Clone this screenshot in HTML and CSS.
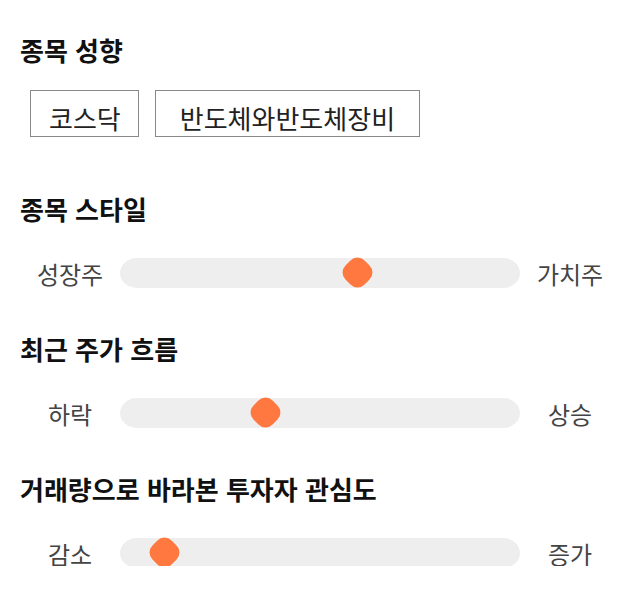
FILE: index.html
```html
<!DOCTYPE html>
<html lang="ko">
<head>
<meta charset="utf-8">
<link rel="stylesheet" href="styles.css">
</head>
<body>
<main class="page">
  <section class="group">
    <h2 class="title">종목 성향</h2>
    <div class="tags">
      <span class="tag tag-short">코스닥</span>
      <span class="tag tag-long">반도체와반도체장비</span>
    </div>
  </section>

  <section class="group slider-group first">
    <h2 class="title">종목 스타일</h2>
    <div class="slider-row">
      <span class="label">성장주</span>
      <div class="track"><span class="thumb" style="left: 222px"></span></div>
      <span class="label">가치주</span>
    </div>
  </section>

  <section class="group slider-group">
    <h2 class="title">최근 주가 흐름</h2>
    <div class="slider-row">
      <span class="label">하락</span>
      <div class="track"><span class="thumb" style="left: 130px"></span></div>
      <span class="label">상승</span>
    </div>
  </section>

  <section class="group slider-group">
    <h2 class="title">거래량으로 바라본 투자자 관심도</h2>
    <div class="slider-row">
      <span class="label">감소</span>
      <div class="track"><span class="thumb" style="left: 29px"></span></div>
      <span class="label">증가</span>
    </div>
  </section>
</main>
</body>
</html>
```

FILE: styles.css
```css
* {
  box-sizing: border-box;
}

html, body {
  margin: 0;
  padding: 0;
  background: #ffffff;
}

body {
  font-family: "Noto Sans CJK KR", "Noto Sans", sans-serif;
  color: #111111;
}

.page {
  width: 640px;
  padding: 33px 20px 0 20px;
}

.title {
  margin: 0;
  font-size: 26px;
  line-height: 34px;
  font-weight: 700;
  color: #111111;
}

.tags {
  display: flex;
  gap: 16px;
  margin-top: 23px;
  padding-left: 10px;
}

.tag {
  display: block;
  height: 47px;
  padding-top: 9px;
  line-height: 36px;
  font-size: 26px;
  color: #222222;
  border: 1px solid #888888;
  white-space: nowrap;
}

.tag-short {
  padding-left: 18px;
  padding-right: 17px;
}

.tag-long {
  padding-left: 24px;
  padding-right: 24px;
}

.slider-group.first {
  margin-top: 55px;
}

.slider-group {
  margin-top: 46px;
}

.slider-row {
  display: grid;
  grid-template-columns: 100px 400px 100px;
  align-items: center;
  margin-top: 30px;
  height: 30px;
}

.label {
  text-align: center;
  font-size: 24px;
  line-height: 30px;
  color: #444444;
  padding-top: 3px;
}

.track {
  position: relative;
  height: 30px;
  background: #eeeeee;
  border-radius: 17px / 15px;
}

.thumb {
  position: absolute;
  top: 0;
  width: 30px;
  height: 30px;
  display: flex;
  align-items: center;
  justify-content: center;
}

.thumb::before {
  content: "";
  display: block;
  width: 27px;
  height: 27px;
  flex: none;
  background: #ff7840;
  border-radius: 10px;
  transform: rotate(45deg);
}
```
